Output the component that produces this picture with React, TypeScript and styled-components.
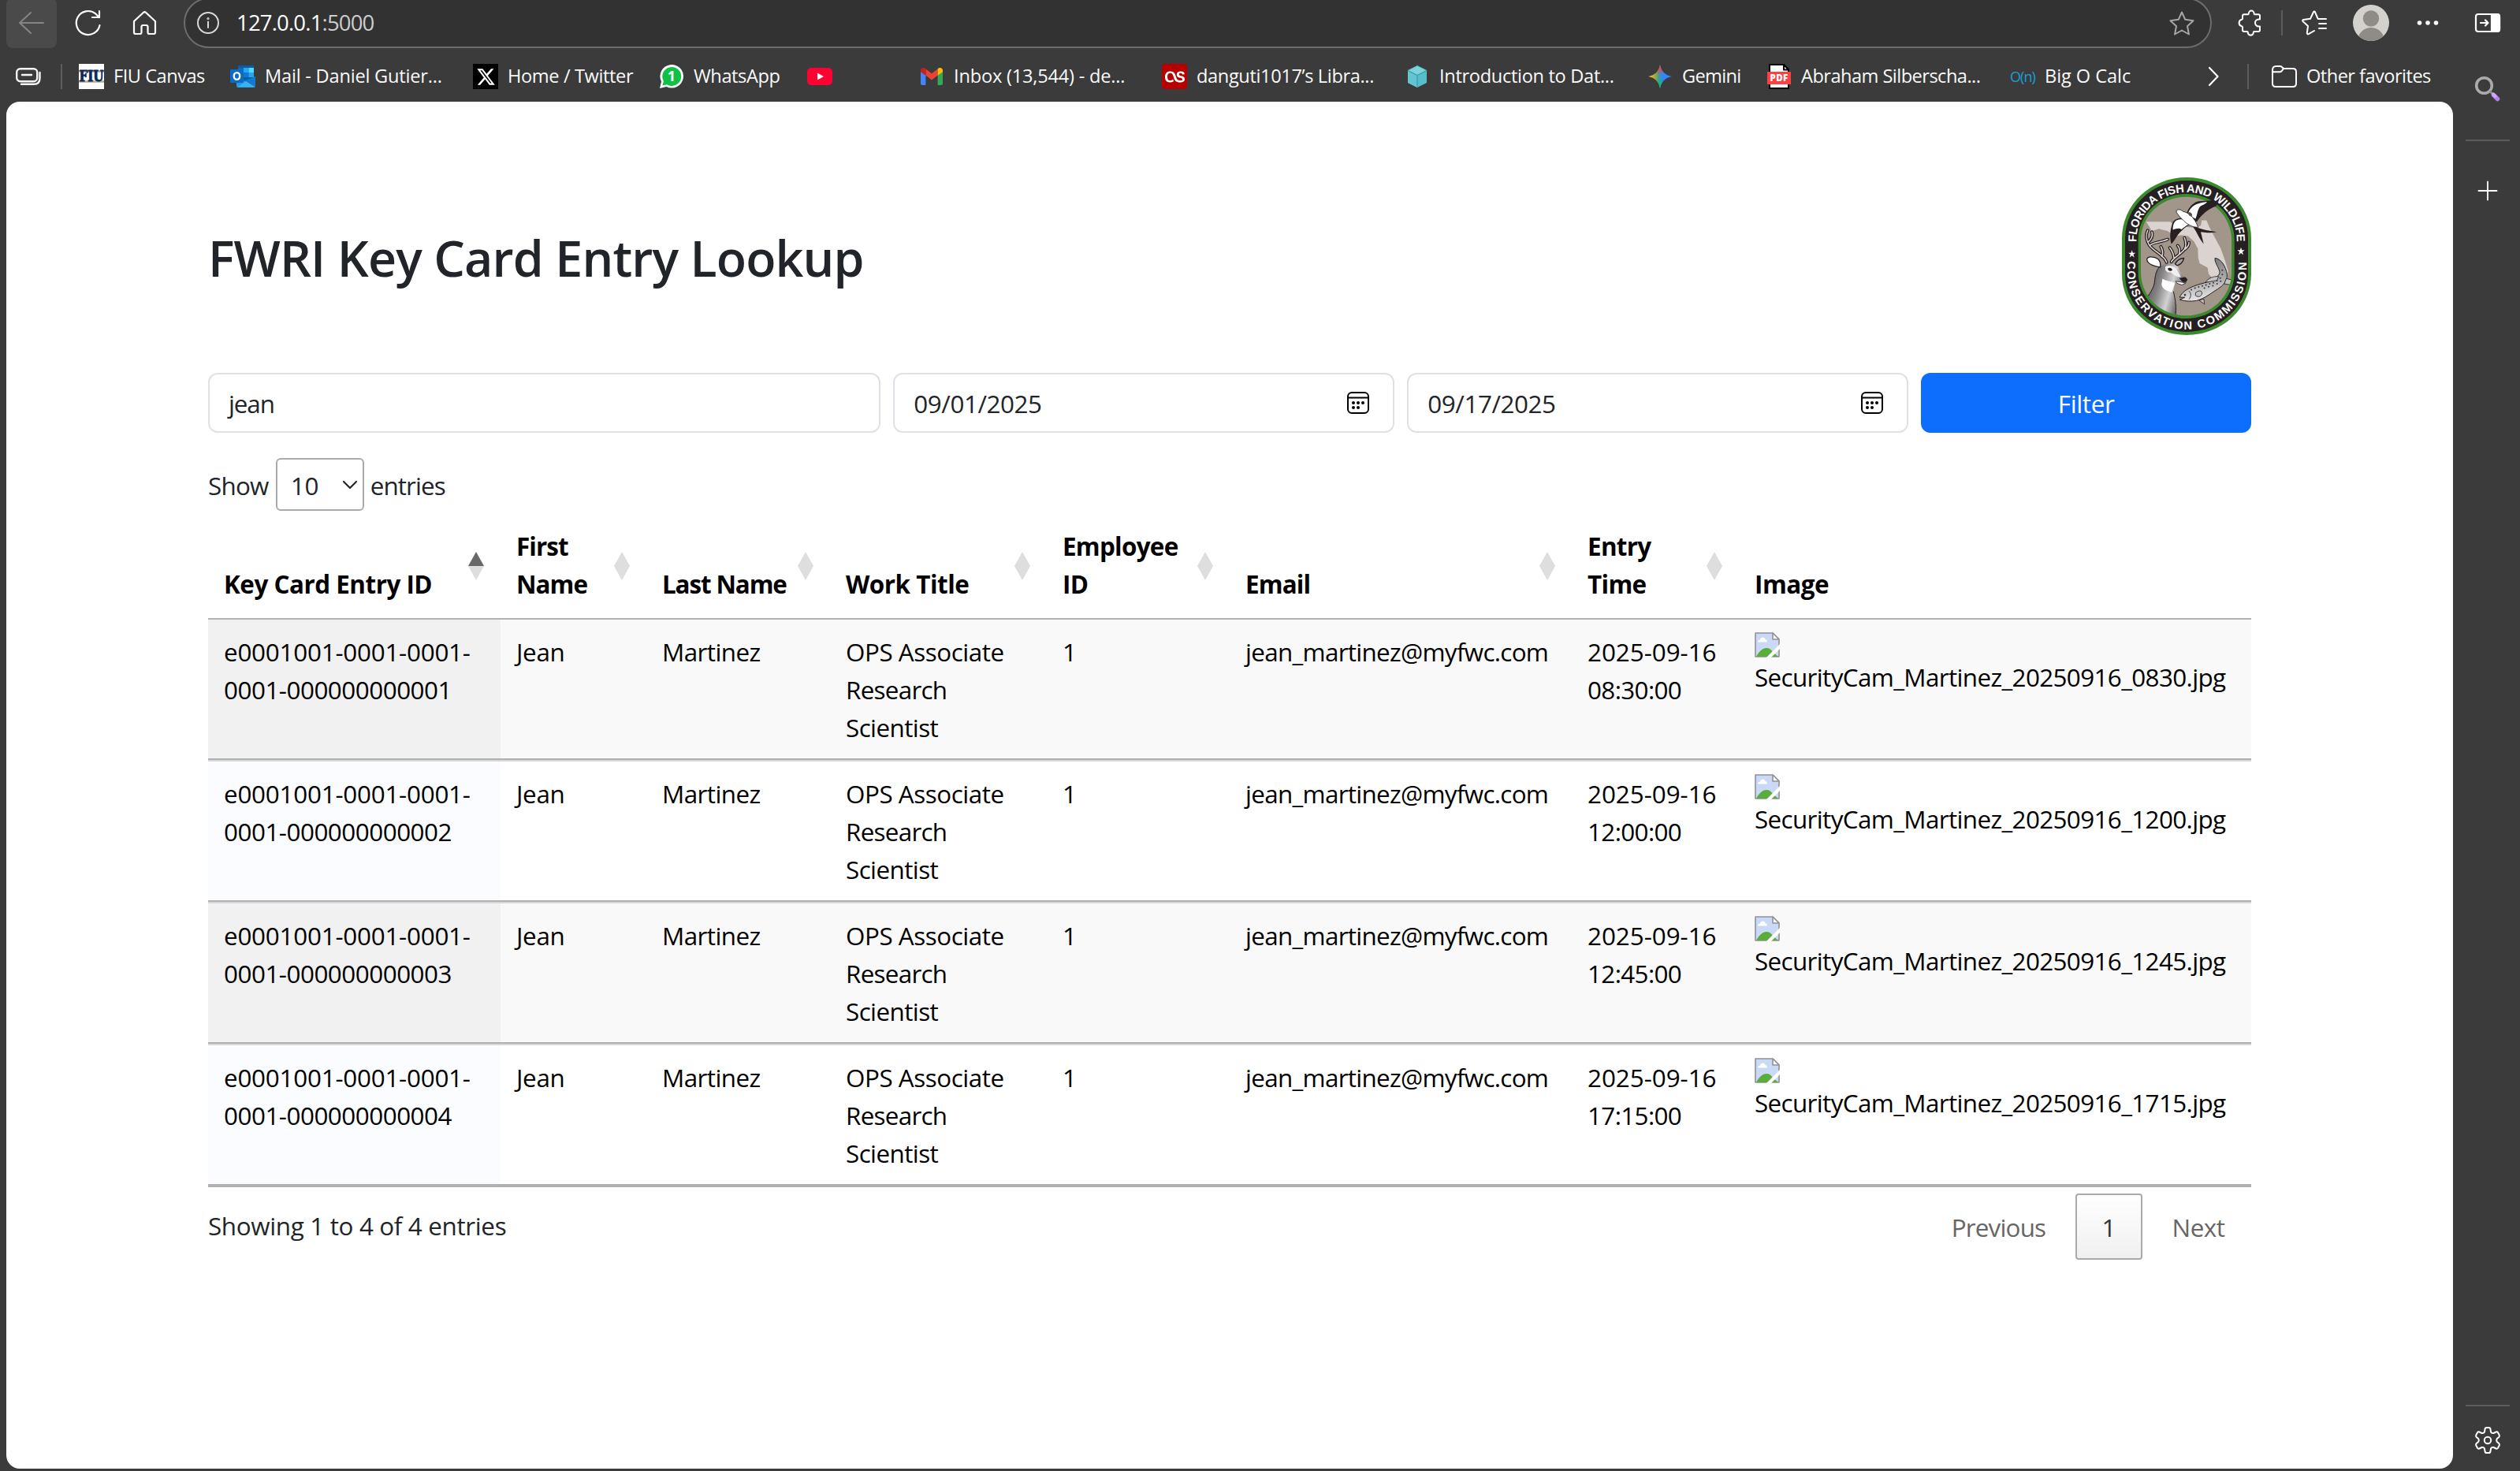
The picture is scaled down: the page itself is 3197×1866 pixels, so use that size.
import React from "react";
import styled, { createGlobalStyle } from "styled-components";
import { FaXTwitter } from "react-icons/fa6";
import { FaLastfm } from "react-icons/fa";

const chrome = "#3b3b3b";
const sans = `"Open Sans", "Noto Sans", sans-serif`;

const GlobalStyle = createGlobalStyle`
  *, *::before, *::after { box-sizing: border-box; }
  body { margin: 0; background: ${chrome}; font-family: ${sans}; }
  #root { height: 100vh; overflow: hidden; }
`;

/* ---------- shared ---------- */

const Label = styled.span<{ $ls?: number }>`
  letter-spacing: ${(p) => p.$ls ?? 0}em;
  white-space: nowrap;
`;

const Icon = styled.svg<{ $w: number; $h: number; $ml?: number }>`
  display: block;
  flex: none;
  width: ${(p) => p.$w}px;
  height: ${(p) => p.$h}px;
  margin-left: ${(p) => p.$ml ?? 0}px;
  fill: none;
  stroke-linecap: round;
  stroke-linejoin: round;
  overflow: visible;
`;

const Rule = styled.i<{ $ml: number }>`
  flex: none;
  width: 2px;
  height: 32px;
  margin-left: ${(p) => p.$ml}px;
  background: #5c5c5c;
`;

/* ---------- browser frame ---------- */

const Window = styled.div`
  display: flex;
  flex-direction: column;
  width: 100%;
  height: 100%;
`;

const Toolbar = styled.header`
  display: flex;
  align-items: center;
  flex: none;
  height: 58px;
  padding-left: 8px;
`;

const BackButton = styled.div`
  display: flex;
  align-items: center;
  justify-content: center;
  flex: none;
  width: 64px;
  height: 64px;
  border-radius: 8px;
  background: #4a4a4a;
`;

const AddressBar = styled.div`
  display: flex;
  align-items: center;
  flex: none;
  width: 2573px;
  height: 64px;
  margin-left: 35px;
  padding: 0 20px 0 15px;
  border: 2px solid #6d6d6d;
  border-radius: 32px;
  background: #323232;
`;

const Url = styled(Label)`
  flex: 1;
  margin-left: 22px;
  font-size: 27.5px;
  line-height: 36px;
  color: #fff;
`;

const Port = styled.span`
  color: #cdcdcd;
`;

const Body = styled.div`
  display: flex;
  flex: 1;
  min-height: 0;
`;

const Column = styled.div`
  display: flex;
  flex-direction: column;
  flex: none;
  width: 3112px;
`;

const Favorites = styled.nav`
  display: flex;
  align-items: center;
  flex: none;
  height: 71px;
  padding: 7px 0 0 20px;
`;

const BookmarkList = styled.div`
  display: flex;
  margin-left: 21px;
`;

const Bookmark = styled.div<{ $width: number }>`
  display: flex;
  align-items: center;
  flex: none;
  width: ${(p) => p.$width}px;
`;

const Favicon = styled.span<{ $bg?: string; $radius?: number }>`
  display: flex;
  align-items: center;
  justify-content: center;
  flex: none;
  width: 32px;
  height: 32px;
  border-radius: ${(p) => p.$radius ?? 0}px;
  background: ${(p) => p.$bg ?? "transparent"};
  color: #fff;
  font-size: 25px;
`;

const BookmarkText = styled(Label)`
  padding: 0 0 2px 12px;
  font-size: 23.6px;
  line-height: 32px;
  color: #fafafa;
`;

const BigO = styled.span`
  font-size: 18px;
  font-weight: 500;
  letter-spacing: -0.9px;
  color: #18a0d2;
`;

const Sidebar = styled.aside`
  display: flex;
  flex-direction: column;
  align-items: center;
  flex: 1;
  padding: 39px 0 22px 3px;
`;

const SidebarRule = styled.i<{ $mt: string }>`
  flex: none;
  width: 56px;
  height: 2px;
  margin-top: ${(p) => p.$mt};
  background: #5c5c5c;
`;

const SidebarSlot = styled.div<{ $mt: number }>`
  margin-top: ${(p) => p.$mt}px;
`;

/* ---------- page ---------- */

const Page = styled.main`
  flex: 1;
  margin: 0 0 3px 8px;
  padding: 96px 256px 0;
  border-radius: 17px;
  background: #fff;
  color: #212529;
  font-size: 31.4px;
  line-height: 48px;
`;

const Heading = styled.div`
  display: flex;
  align-items: center;
  justify-content: space-between;
  height: 200px;
  margin-bottom: 48px;
`;

const Title = styled.h1`
  margin: 0;
  padding-top: 4px;
  font-size: 62.7px;
  font-weight: 600;
  line-height: 76px;
  letter-spacing: -0.0139em;
`;

const FilterForm = styled.div`
  display: grid;
  grid-template-columns: 853.3px 636px 636px 418.7px;
  column-gap: 16px;
  height: 76px;
`;

const FieldText = styled(Label)`
  padding-top: 2px;
`;

const Field = styled.div`
  display: flex;
  align-items: center;
  justify-content: space-between;
  padding: 0 30px 0 24px;
  border: 2px solid #dee2e6;
  border-radius: 12px;
`;

const SubmitButton = styled.button`
  padding: 2px 0 0;
  border: 0;
  border-radius: 12px;
  background: #0d6efd;
  color: #fff;
  font: inherit;
`;

const LengthRow = styled.div`
  display: flex;
  align-items: center;
  height: 67px;
  margin-top: 32px;
`;

const LengthSelect = styled.div`
  display: flex;
  align-items: center;
  justify-content: space-between;
  width: 112px;
  height: 67px;
  margin: 0 8px 0 9px;
  padding: 0 7px 0 17px;
  border: 2px solid #aaa;
  border-radius: 6px;
`;

const Table = styled.table`
  width: 2592px;
  table-layout: fixed;
  border-collapse: separate;
  border-spacing: 0;
  border-bottom: 2px solid #b0b0b0;
  color: #000;
`;

const Col = styled.col<{ $w: number }>`
  width: ${(p) => p.$w}px;
`;

const HeadCell = styled.th`
  height: 138px;
  padding: 21px 0 19px 20px;
  border-bottom: 2px solid #b2b2b2;
  text-align: left;
  vertical-align: bottom;
`;

const HeadInner = styled.div`
  display: flex;
  align-items: flex-end;
  justify-content: space-between;
  height: 96px;
  padding-right: 21px;
`;

const Sorter = styled.span<{ $asc?: boolean }>`
  display: flex;
  flex-direction: column;
  align-self: center;
  margin-top: 2px;
  &::before, &::after {
    content: "";
    border: 10px solid transparent;
  }
  &::before { border-top: 0; border-bottom: 18px solid ${(p) => (p.$asc ? "#696969" : "#dedede")}; }
  &::after { border-bottom: 0; border-top: 18px solid #dedede; }
`;

const Cell = styled.td`
  height: 178px;
  padding: 17px 0 15px 20px;
  border-bottom: 2px solid #b0b0b0;
  vertical-align: top;
`;

const ImageCell = styled(Cell)`
  padding-top: 16px;
`;

const Row = styled.tr`
  ${Cell} { background: #fff; }
  ${Cell}:first-child { background: #fafcff; }
  &:nth-child(odd) ${Cell} { background: #f9f9f9; }
  &:nth-child(odd) ${Cell}:first-child { background: #f1f1f1; }
  & + & ${Cell} { height: 180px; border-top: 2px solid #d8d8d8; }
`;

const Line = styled.span<{ $ls?: number }>`
  display: block;
  letter-spacing: ${(p) => p.$ls ?? 0}em;
  white-space: nowrap;
`;

const Footer = styled.footer`
  display: flex;
  justify-content: space-between;
  margin-top: 8px;
`;

const Info = styled(Label)`
  padding: 17px 0 0 0;
`;

const Pager = styled.div`
  display: flex;
  gap: 4px;
  height: 84px;
  color: #666;
`;

const PageButton = styled.span<{ $w: number; $current?: boolean }>`
  display: flex;
  align-items: center;
  justify-content: center;
  width: ${(p) => p.$w}px;
  padding-top: 2px;
  ${(p) =>
    p.$current &&
    `
    border: 2px solid #aaa;
    border-radius: 4px;
    background: linear-gradient(#fff, #f0f0f0);
    color: #333;
  `}
`;

/* ---------- drawings ---------- */

const Calendar = () => (
  <Icon $w={28} $h={28} viewBox="0 0 28 28" stroke="#000" strokeWidth="2">
    <rect x="1" y="1" width="26" height="26" rx="5" />
    <path d="M1 7.500H27" />
    <g fill="#000" stroke="none">
      <circle cx="8" cy="14" r="2" />
      <circle cx="14" cy="14" r="2" />
      <circle cx="20" cy="14" r="2" />
      <circle cx="8" cy="20" r="2" />
      <circle cx="14" cy="20" r="2" />
    </g>
  </Icon>
);

const BrokenSvg = styled(Icon)`
  margin-bottom: 1px;
  overflow: hidden;
`;

const BrokenImage = () => (
  <BrokenSvg $w={32} $h={32} viewBox="0 0 32 32">
    <path d="M1 1H23L31 9V31H1Z" fill="#c9d9f6" stroke="#8f9296" strokeWidth="1.6" />
    <path d="M23 1V9H31Z" fill="#fff" stroke="#8f9296" strokeWidth="1.6" />
    <path d="M4 12.500C4 10.500 6 9.600 7 9.600C7.500 6 12.500 5.500 13.500 9C16 9.500 16 11 15.800 12.500Z" fill="#fff" />
    <path d="M2 31C6 24 10 20 15 20C19 20 21 22 23 25L30 31Z" fill="#5aad3a" />
    <path d="M33 14L15 32H21L33 20Z" fill="#fff" />
  </BrokenSvg>
);

const Gmail = () => (
  <Icon $w={28} $h={22} viewBox="0 0 28 22">
    <path d="M0 4L6.400 8.800V22H2A2 2 0 0 1 0 20Z" fill="#4285f4" />
    <path d="M28 4L21.600 8.800V22H26A2 2 0 0 0 28 20Z" fill="#34a853" />
    <path d="M6.400 1.500L14 7.300L21.600 1.500V9.600L14 15.400L6.400 9.600Z" fill="#ea4335" />
    <path d="M21.600 1.500C24 -1 28 0 28 3.500V5.200L21.600 9.800Z" fill="#fbbc04" />
    <path d="M6.400 1.500C4 -1 0 0 0 3.500V5.200L6.400 9.800Z" fill="#c5221f" />
  </Icon>
);

const Outlook = () => (
  <Icon $w={32} $h={28} viewBox="0 0 32 28">
    <path d="M10 0H30V20H10Z" fill="#0a5ba8" />
    <path d="M10 3H17V9H10Z" fill="#1368b8" />
    <path d="M17 3H23.500V9H17Z" fill="#28a8ea" />
    <path d="M23.500 3H30V9H23.500Z" fill="#50d9ff" />
    <path d="M17 9H23.500V15H17Z" fill="#0f78d4" />
    <path d="M23.500 9H30V15H23.500Z" fill="#28a8ea" />
    <path d="M8 26V17L20 20L32 14V26A2 2 0 0 1 30 28H10A2 2 0 0 1 8 26Z" fill="#1f9be6" />
    <path d="M32 14V27L18 19.500Z" fill="#127bcb" />
    <path d="M9 27.500L20 20L31 27.500Z" fill="#35b4f1" />
    <rect x="0" y="5" width="17" height="17" rx="1.500" fill="#0a6cc9" />
    <ellipse cx="8.500" cy="13.500" rx="3.700" ry="4.400" stroke="#fff" strokeWidth="2.400" />
  </Icon>
);

const WhatsApp = () => (
  <Icon $w={30} $h={30} viewBox="0 0 30 30">
    <path d="M0 30L2 21.500A14.800 14.800 0 1 1 8.500 28Z" fill="#fff" />
    <path d="M3.500 26.500L4.900 21A12 12 0 1 1 9.200 25.300Z" fill="#0fc144" />
    <text x="14.800" y="21" fill="#fff" fontSize="18" fontWeight="700" textAnchor="middle">1</text>
  </Icon>
);

const YouTube = () => (
  <Icon $w={32} $h={22} viewBox="0 0 32 22">
    <rect width="32" height="22" rx="5" fill="#ff0033" />
    <path d="M13 6.500L21 11L13 15.500Z" fill="#fff" />
  </Icon>
);

const Cube = () => (
  <Icon $w={24} $h={28} viewBox="0 0 24 28">
    <path d="M12 0L24 6V22L12 28L0 22V6Z" fill="#57bfcb" />
    <path d="M12 1L23 6.500L12 12.500L1 6.500Z" fill="#7bd3dc" />
    <path d="M12 12.500V28L0 22V6.500Z" fill="#63c5d0" />
    <path d="M12 12.500V27M1 7L12 12.500L23 7" stroke="#3f9aa6" strokeWidth="1.200" />
  </Icon>
);

const Gemini = () => (
  <Icon $w={30} $h={30} viewBox="0 0 30 30">
    <defs>
      <linearGradient id="gemA" x1="0" y1="0.5" x2="1" y2="0.5">
        <stop offset="0.1" stopColor="#fbbc04" />
        <stop offset="0.45" stopColor="#4a9a8c" />
        <stop offset="0.6" stopColor="#3186ff" />
      </linearGradient>
      <linearGradient id="gemB" x1="0.5" y1="0" x2="0.55" y2="1">
        <stop offset="0.1" stopColor="#f43f4e" />
        <stop offset="0.42" stopColor="#f43f4e" stopOpacity="0" />
        <stop offset="0.6" stopColor="#14bb69" stopOpacity="0" />
        <stop offset="0.85" stopColor="#14bb69" />
      </linearGradient>
    </defs>
    <path d="M15 0C16.500 8.500 21.500 13.500 30 15C21.500 16.500 16.500 21.500 15 30C13.500 21.500 8.500 16.500 0 15C8.500 13.500 13.500 8.500 15 0Z" fill="url(#gemA)" />
    <path d="M15 0C16.500 8.500 21.500 13.500 30 15C21.500 16.500 16.500 21.500 15 30C13.500 21.500 8.500 16.500 0 15C8.500 13.500 13.500 8.500 15 0Z" fill="url(#gemB)" />
  </Icon>
);

const Pdf = () => (
  <Icon $w={30} $h={32} viewBox="0 0 30 32">
    <path d="M3 1H21L27 7.500V31H3Z" fill="#fff" stroke="#000" strokeWidth="2" />
    <path d="M21 1V7.500H27Z" fill="#fff" stroke="#000" strokeWidth="2" />
    <rect y="10" width="30" height="16" fill="#ff4040" />
    <text x="15" y="22.400" fill="#fff" fontSize="11.500" fontWeight="800" textAnchor="middle" letterSpacing="0.300">PDF</text>
  </Icon>
);

const Fiu = () => (
  <Icon $w={32} $h={32} viewBox="0 0 32 32">
    <rect width="32" height="32" fill="#fff" />
    <path d="M0 9.500H32M0 22.500H32" stroke="#b9ac86" strokeWidth="2.500" strokeLinecap="butt" />
    <text x="0.500" y="22" fill="#0b2a5c" stroke="#0b2a5c" strokeWidth="0.900" fontSize="18" fontWeight="700" fontFamily="'DejaVu Serif', serif" textLength="31" lengthAdjust="spacingAndGlyphs">FIU</text>
  </Icon>
);

const leftAntler = "M236 368C230 342 186 326 170 302C158 284 156 262 164 246M172 304C182 290 216 292 240 280M166 290C178 280 184 266 180 252M218 346C224 330 220 318 214 308";
const rightAntler = "M254 366C262 350 292 336 304 318C314 302 308 286 304 274M264 350C262 336 256 322 248 312M284 336C288 320 282 308 278 304M306 318C316 310 322 302 321 292";

const fishSpots = [
  [330, 472], [344, 466], [358, 462], [372, 458], [386, 454], [400, 450], [414, 446], [428, 438],
  [440, 428], [448, 414], [448, 398], [380, 466], [396, 461], [412, 457], [428, 450], [442, 440],
];

/* Commission seal: a stadium-shaped ring with lettering around a wildlife scene. */
const Seal = () => (
  <Icon $w={164} $h={200} viewBox="66 44 492 601" preserveAspectRatio="none">
    <defs>
      <path id="arcTop" d="M121 290V282A191 181 0 0 1 503 282V290" />
      <path id="arcBottom" d="M86 363V399A226 224 0 0 0 539 399V363" />
      <linearGradient id="fur" x1="0" y1="0.2" x2="1" y2="0.6">
        <stop offset="0" stopColor="#4d4a4b" />
        <stop offset="0.35" stopColor="#8c8a8b" />
        <stop offset="0.6" stopColor="#d4d3d4" />
        <stop offset="0.85" stopColor="#6b696a" />
      </linearGradient>
      <linearGradient id="scales" x1="0" y1="0" x2="0.2" y2="1">
        <stop offset="0" stopColor="#6f6e6f" />
        <stop offset="0.6" stopColor="#a9a8a9" />
        <stop offset="1" stopColor="#e6e6e6" />
      </linearGradient>
      <clipPath id="inner"><rect x="138" y="118" width="345" height="453" rx="172" ry="164" /></clipPath>
    </defs>
    <rect x="66" y="44" width="492" height="601" rx="246" ry="232" fill="#3b8a2d" />
    <rect x="78" y="56" width="468" height="577" rx="234" ry="220" fill="#272022" />
    <rect x="128" y="107" width="366" height="475" rx="183" ry="174" fill="#3b8a2d" />
    <rect x="138" y="118" width="345" height="453" rx="172" ry="164" fill="#a29589" />
    <g clipPath="url(#inner)">
      <path d="M158 213H250L262 226L300 232L346 236L366 228L370 208L388 208L398 232L415 265L442 315L458 360L470 400L466 440L420 440L396 412L392 388L362 372L356 350L355 316L340 288L318 268L290 264L268 270L240 248L206 240L178 250L174 238Z" fill="#dbd3cf" />
      <path d="M163 500C176 480 184 470 188 450C190 420 196 396 210 384L240 370L272 374C282 388 290 408 296 418L314 430L312 446L292 454L268 446L262 480C270 510 274 540 270 575H180Z" fill="url(#fur)" />
      <path d="M163 500C176 480 186 466 190 446C192 420 196 396 210 384M262 480C270 510 274 540 270 575" stroke="#272022" strokeWidth="3" />
      <path d="M220 430C232 438 250 440 268 446L256 482C240 478 220 470 217 454Z" fill="#fff" />
      <path d="M231 384C242 378 262 380 272 392C280 404 286 414 290 424C272 424 262 414 252 406C242 408 234 402 231 396Z" fill="#f2f0ef" />
      <path d="M240 392C248 386 256 390 258 398C250 404 242 400 240 392Z" fill="#272022" />
      <path d="M284 428L308 424L316 434L308 444L296 442Z" fill="#272022" />
      <path d="M272 440L296 444L308 448L294 454L276 448Z" fill="#fff" stroke="#272022" strokeWidth="2.500" />
      <path d="M212 386C196 386 164 376 161 358C162 342 190 346 204 356C212 364 214 374 212 386Z" fill="#fff" stroke="#272022" strokeWidth="4" />
      <path d="M268 374C276 360 286 352 302 352C298 368 290 376 276 380Z" fill="#a8a5a5" stroke="#272022" strokeWidth="4" />
      <path d={leftAntler + rightAntler} stroke="#272022" strokeWidth="12" />
      <path d={leftAntler + rightAntler} stroke="#e2dcd8" strokeWidth="4.500" />
      <path d="M286 500C296 478 322 464 352 454C388 444 424 436 438 410C440 392 418 372 420 352C442 352 462 384 466 414C468 440 452 456 430 470C404 486 384 504 350 514C326 518 302 516 286 510L304 502Z" fill="url(#scales)" stroke="#272022" strokeWidth="3" />
      <path d="M384 444C394 428 414 420 434 422L428 436ZM464 430L482 434L482 454L456 450ZM360 512L378 508L380 526ZM348 482C362 472 374 476 370 490C364 502 352 500 346 494Z" fill="#c4c3c4" stroke="#272022" strokeWidth="2.500" />
      {fishSpots.map(([x, y]) => (
        <circle key={`${x}-${y}`} cx={x} cy={y} r="3" fill="#3a3536" />
      ))}
      <circle cx="306" cy="492" r="4" fill="#3a3536" />
      <path d="M322 478C330 486 330 498 322 508" stroke="#272022" strokeWidth="2.500" />
    </g>
    <path d="M310 186C320 158 336 140 358 135L440 130L424 154C396 164 370 184 352 212L330 212Z" fill="#272022" />
    <path d="M316 186C324 160 340 142 390 137C384 148 366 150 360 160C352 176 352 190 346 202Z" fill="#fff" />
    <path d="M312 204C290 194 268 202 260 214C250 240 246 270 254 298C262 292 270 276 280 262C294 246 306 232 330 222Z" fill="#272022" />
    <path d="M312 210C290 198 270 206 264 218C260 228 259 238 260 244C272 240 284 236 292 242C302 236 310 228 322 222Z" fill="#fff" />
    <path d="M340 222L356 236C380 246 408 248 426 252C400 258 384 254 366 252C370 268 374 284 377 298C360 278 350 250 336 232Z" fill="#272022" />
    <path d="M274 170C280 164 290 166 298 174C320 178 342 196 356 234C336 236 312 222 296 204C286 196 280 186 274 178Z" fill="#fff" stroke="#272022" strokeWidth="2.500" />
    <path d="M318 178C328 174 336 184 332 192C324 194 318 188 318 178Z" fill="#55504f" />
    <g fill="#fff" fontFamily="'Liberation Sans', Arial, sans-serif" fontWeight="700" fontSize="44">
      <text><textPath href="#arcTop" textLength="600" lengthAdjust="spacing">FLORIDA FISH AND WILDLIFE</textPath></text>
      <text><textPath href="#arcBottom" textLength="776" lengthAdjust="spacing">CONSERVATION COMMISSION</textPath></text>
    </g>
    <path d="M104 321L107.500 331.500H118L109.500 338L113 349L104 342.500L95 349L98.500 338L90 331.500H100.500Z" fill="#fff" />
    <path d="M519 311L522.500 321.500H533L524.500 328L528 339L519 332.500L510 339L513.500 328L505 321.500H515.500Z" fill="#fff" />
  </Icon>
);

/* ---------- data ---------- */

const bookmarks: { text?: string; ls?: number; width: number; icon: React.ReactNode; bg?: string; radius?: number }[] = [
  { text: "FIU Canvas", ls: -0.0205, width: 192, icon: <Fiu /> },
  { text: "Mail - Daniel Gutier...", ls: -0.009, width: 308, icon: <Outlook /> },
  { text: "Home / Twitter", ls: -0.016, width: 236, icon: <FaXTwitter />, bg: "#000" },
  { text: "WhatsApp", ls: -0.018, width: 188, icon: <WhatsApp /> },
  { width: 142, icon: <YouTube /> },
  { text: "Inbox (13,544) - de...", ls: -0.0085, width: 308, icon: <Gmail /> },
  { text: "danguti1017’s Libra...", ls: -0.0155, width: 308, icon: <FaLastfm />, bg: "#b90000", radius: 4 },
  { text: "Introduction to Dat...", ls: -0.0135, width: 308, icon: <Cube /> },
  { text: "Gemini", ls: -0.0286, width: 151, icon: <Gemini /> },
  { text: "Abraham Silberscha...", ls: -0.0225, width: 309, icon: <Pdf /> },
  { text: "Big O Calc", ls: -0.003, width: 252, icon: <BigO>O(n)</BigO> },
];

const columns = [
  { w: 371, lines: ["Key Card Entry ID"], ls: -0.0155, asc: true },
  { w: 185, lines: ["First", "Name"], ls: -0.03 },
  { w: 233, lines: ["Last Name"], ls: -0.036 },
  { w: 275, lines: ["Work Title"], ls: -0.0155 },
  { w: 232, lines: ["Employee", "ID"], ls: -0.023 },
  { w: 434, lines: ["Email"], ls: -0.028 },
  { w: 212, lines: ["Entry", "Time"], ls: -0.022 },
  { w: 650, lines: ["Image"], ls: -0.0143, plain: true },
];

const entries = [
  { n: 1, time: "08:30:00", file: "0830" },
  { n: 2, time: "12:00:00", file: "1200" },
  { n: 3, time: "12:45:00", file: "1245" },
  { n: 4, time: "17:15:00", file: "1715" },
];

/* ---------- app ---------- */

export default function App() {
  return (
    <Window>
      <GlobalStyle />
      <Toolbar>
        <BackButton>
          <Icon $w={32} $h={28} viewBox="0 0 32 28" stroke="#858585" strokeWidth="2">
            <path d="M1 14H31M15 1L1 14L15 27" />
          </Icon>
        </BackButton>
        <Icon $w={32} $h={32} $ml={24} viewBox="0 0 32 32" stroke="#fff" strokeWidth="2.2">
          <path d="M30.500 19A15 15 0 1 1 25 4.200L30 9" />
          <path d="M30 1V9H21" />
        </Icon>
        <Icon $w={29} $h={30} $ml={41} viewBox="0 0 29 30" stroke="#fff" strokeWidth="2.2">
          <path d="M1 13L12.800 2Q14.500 0.500 16.200 2L28 13V27Q28 29 26 29H20.500Q18.500 29 18.500 27V20Q18.500 18 16.500 18H12.500Q10.500 18 10.500 20V27Q10.500 29 8.500 29H3Q1 29 1 27Z" />
        </Icon>
        <AddressBar>
          <Icon $w={28} $h={28} viewBox="0 0 28 28" stroke="#d8d8d8" strokeWidth="2">
            <circle cx="14" cy="14" r="13" />
            <path d="M14 12.500V20" />
            <circle cx="14" cy="8.500" r="0.600" />
          </Icon>
          <Url $ls={-0.0303}>
            127.0.0.1<Port>:5000</Port>
          </Url>
          <Icon $w={32} $h={31} viewBox="0 0 32 31" stroke="#a6a6a6" strokeWidth="2">
            <path d="M16 1.500L20.300 10.800L30.500 12.200L23 19.300L25 29.500L16 24.500L7 29.500L9 19.300L1.500 12.200L11.700 10.800Z" />
          </Icon>
        </AddressBar>
        <Icon $w={30} $h={32} $ml={34} viewBox="0 0 30 32" stroke="#fff" strokeWidth="2">
          <path d="M7 5.200H11.700Q12.800 5.200 12.800 4A3.400 3.400 0 0 1 19.600 4Q19.600 5.200 20.700 5.200H25Q27 5.200 27 7.200V11.500H25.500A4.200 4.200 0 0 0 25.500 20.500H27V25Q27 27 25 27H20Q18.800 27 18.800 28.200A3.500 3.500 0 0 1 11.800 28.200Q11.800 27 10.600 27H7Q5 27 5 25V21.500Q5 20.300 4 20.200A4.300 4.300 0 0 1 4 11.800Q5 11.700 5 10.500V7.200Q5 5.200 7 5.200Z" />
        </Icon>
        <Rule $ml={24} />
        <Icon $w={32} $h={32} $ml={24} viewBox="0 0 32 32" stroke="#fff" strokeWidth="2">
          <path d="M22 11H31M22 17H31M22 23H31" />
          <path d="M22 11L20.500 10.700L17 2.300Q16 0.500 15 2.300L11 10.700L2.200 12Q0.300 12.600 1.700 14.200L8 20L6.800 28.800Q6.900 31 8.800 30.200L16 26" />
        </Icon>
        <Icon $w={46} $h={46} $ml={33} viewBox="0 0 46 46">
          <defs>
            <clipPath id="face"><circle cx="23" cy="23" r="23" /></clipPath>
          </defs>
          <circle cx="23" cy="23" r="23" fill="#d3d1ce" />
          <g clipPath="url(#face)" fill="#8f8b87">
            <circle cx="23" cy="17.500" r="10.200" />
            <ellipse cx="23" cy="46" rx="17" ry="17" />
          </g>
        </Icon>
        <Icon $w={28} $h={6} $ml={35} viewBox="0 0 28 6">
          <g fill="#fff">
            <circle cx="3.500" cy="3" r="2.800" />
            <circle cx="14" cy="3" r="2.800" />
            <circle cx="24.500" cy="3" r="2.800" />
          </g>
        </Icon>
        <Icon $w={32} $h={24} $ml={46} viewBox="0 0 32 24" stroke="#fff" strokeWidth="2.2">
          <rect x="1" y="1" width="30" height="22" rx="3" />
          <path d="M21 1H28Q31 1 31 4V20Q31 23 28 23H21Z" fill="#fff" />
          <path d="M7 12H16M13 8.500L16.500 12L13 15.500" />
        </Icon>
      </Toolbar>

      <Body>
        <Column>
          <Favorites>
            <Icon $w={32} $h={22} viewBox="0 0 32 22" stroke="#f4f4f4" strokeWidth="2.4">
              <rect x="1.200" y="1.200" width="26" height="16" rx="4.500" />
              <path d="M8 9H20M30.500 6V13Q30.500 20.800 23 20.800H7" />
            </Icon>
            <Rule $ml={25} />
            <BookmarkList>
              {bookmarks.map((b, i) => (
                <Bookmark key={i} $width={b.width}>
                  <Favicon $bg={b.bg} $radius={b.radius}>{b.icon}</Favicon>
                  {b.text && <BookmarkText $ls={b.ls}>{b.text}</BookmarkText>}
                </Bookmark>
              ))}
            </BookmarkList>
            <Icon $w={12} $h={24} viewBox="0 0 12 24" stroke="#fff" strokeWidth="2.2">
              <path d="M1 1L11.500 12L1 23" />
            </Icon>
            <Rule $ml={37} />
            <Icon $w={32} $h={28} $ml={29} viewBox="0 0 32 28" stroke="#fff" strokeWidth="2">
              <path d="M1 6Q1 1 5.500 1H10Q12 1 13.200 2.200L15 4H27Q31 4 31 8V23Q31 27 27 27H5Q1 27 1 23Z" />
              <path d="M1 8.300H10Q11.500 8.300 12.500 7.300L15 4" />
            </Icon>
            <BookmarkText $ls={-0.0225}>Other favorites</BookmarkText>
          </Favorites>

          <Page>
            <Heading>
              <Title>FWRI Key Card Entry Lookup</Title>
              <Seal />
            </Heading>

            <FilterForm>
              <Field><FieldText $ls={-0.035}>jean</FieldText></Field>
              <Field><FieldText $ls={-0.014}>09/01/2025</FieldText><Calendar /></Field>
              <Field><FieldText $ls={-0.014}>09/17/2025</FieldText><Calendar /></Field>
              <SubmitButton><Label $ls={-0.0113}>Filter</Label></SubmitButton>
            </FilterForm>

            <LengthRow>
              <FieldText $ls={-0.0239}>Show</FieldText>
              <LengthSelect>
                <FieldText>10</FieldText>
                <Icon $w={18} $h={10} viewBox="0 0 18 10" stroke="#212529" strokeWidth="2.2">
                  <path d="M1 1L9 9L17 1" />
                </Icon>
              </LengthSelect>
              <FieldText $ls={-0.0279}>entries</FieldText>
            </LengthRow>

            <Table>
              <colgroup>
                {columns.map((c, i) => <Col key={i} $w={c.w} />)}
              </colgroup>
              <thead>
                <tr>
                  {columns.map((c, i) => (
                    <HeadCell key={i}>
                      <HeadInner>
                        <div>
                          {c.lines.map((l) => <Line key={l} $ls={c.ls}>{l}</Line>)}
                        </div>
                        {!c.plain && <Sorter $asc={c.asc} />}
                      </HeadInner>
                    </HeadCell>
                  ))}
                </tr>
              </thead>
              <tbody>
                {entries.map((e) => (
                  <Row key={e.n}>
                    <Cell>
                      <Line $ls={-0.0075}>e0001001-0001-0001-</Line>
                      <Line $ls={-0.0155}>0001-00000000000{e.n}</Line>
                    </Cell>
                    <Cell><Line $ls={-0.01}>Jean</Line></Cell>
                    <Cell><Line $ls={-0.018}>Martinez</Line></Cell>
                    <Cell>
                      <Line $ls={-0.0145}>OPS Associate</Line>
                      <Line $ls={-0.023}>Research</Line>
                      <Line $ls={-0.018}>Scientist</Line>
                    </Cell>
                    <Cell>1</Cell>
                    <Cell><Line $ls={-0.022}>jean_martinez@myfwc.com</Line></Cell>
                    <Cell>
                      <Line $ls={-0.001}>2025-09-16</Line>
                      <Line $ls={-0.02}>{e.time}</Line>
                    </Cell>
                    <ImageCell>
                      <BrokenImage />
                      <Line $ls={-0.02}>SecurityCam_Martinez_20250916_{e.file}.jpg</Line>
                    </ImageCell>
                  </Row>
                ))}
              </tbody>
            </Table>

            <Footer>
              <Info $ls={-0.011}>Showing 1 to 4 of 4 entries</Info>
              <Pager>
                <PageButton $w={187}><Label $ls={-0.026}>Previous</Label></PageButton>
                <PageButton $w={85} $current>1</PageButton>
                <PageButton $w={134}><Label $ls={-0.016}>Next</Label></PageButton>
              </Pager>
            </Footer>
          </Page>
        </Column>

        <Sidebar>
          <Icon $w={32} $h={32} viewBox="0 0 32 32">
            <circle cx="11.500" cy="11.500" r="9.800" stroke="#aaa" strokeWidth="3.600" />
            <path d="M19.500 19.500L22 22" stroke="#8a8a8a" strokeWidth="3" />
            <path d="M23.500 23.500L28.500 28.500" stroke="#b583e8" strokeWidth="5.500" />
            <path d="M23 22.500L25.500 25" stroke="#d3a6fb" strokeWidth="4" />
          </Icon>
          <SidebarRule $mt="48px" />
          <SidebarSlot $mt={51}>
            <Icon $w={24} $h={24} viewBox="0 0 24 24" stroke="#fff" strokeWidth="1.8">
              <path d="M12 0.500V23.500M0.500 12H23.500" />
            </Icon>
          </SidebarSlot>
          <SidebarRule $mt="auto" />
          <SidebarSlot $mt={26}>
            <Icon $w={32} $h={34} viewBox="0 0 32 34" stroke="#fff" strokeWidth="2">
              <path d="M12.500 3Q12.800 1 14.500 1H17.500Q19.200 1 19.500 3L20 6.500Q21 8.500 23.500 8L26.500 6.500Q28.300 6 29 7.200L30.800 10.500Q31.300 12 30 13.200L27.800 15Q26.500 17 27.800 19L30 20.800Q31.300 22 30.800 23.500L29 26.800Q28.300 28 26.500 27.500L23.500 26Q21 25.500 20 27.500L19.500 31Q19.200 33 17.500 33H14.500Q12.800 33 12.500 31L12 27.500Q11 25.500 8.500 26L5.500 27.500Q3.700 28 3 26.800L1.200 23.500Q0.700 22 2 20.800L4.200 19Q5.500 17 4.200 15L2 13.200Q0.700 12 1.200 10.500L3 7.200Q3.700 6 5.500 6.500L8.500 8Q11 8.500 12 6.500Z" />
              <circle cx="16" cy="17" r="4.200" />
            </Icon>
          </SidebarSlot>
        </Sidebar>
      </Body>
    </Window>
  );
}
